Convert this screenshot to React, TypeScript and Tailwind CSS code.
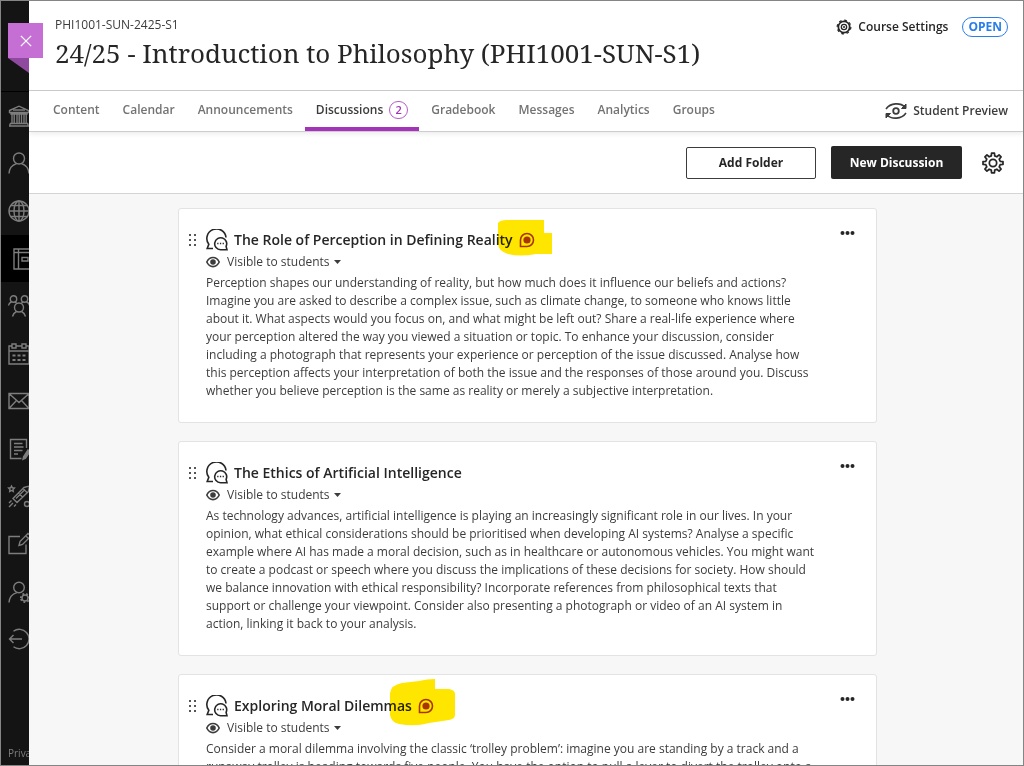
import type { ReactNode } from 'react'
import { clsx } from 'clsx'

type NavItem = {
  id: string
  label: string
  active?: boolean
  icon: ReactNode
}

type Discussion = {
  id: string
  title: string
  body: string
  highlight?: string
}

const NAV_ITEMS: NavItem[] = [
  {
    id: 'institution',
    label: 'Institution Page',
    icon: (
      <>
        <path d="M1.5 5.5 11 1.2l9.500 4.300v2H1.500zM3 7.500V9h16V7.500M1 21h20M2 18.500h18M2 18.500V21M20 18.500V21" />
        <path d="M4 9v9.500M6.200 9v9.500M9 9v9.500M11.200 9v9.500M13.500 9v9.500M16 9v9.500M18.200 9v9.500M5 5h12" />
      </>
    ),
  },
  {
    id: 'profile',
    label: 'Profile',
    icon: (
      <>
        <circle cx="11" cy="6.500" r="5.500" />
        <path d="M1 21.500c.3-5 3.500-8.500 7.500-9.800M13.500 11.700c4 1.300 7.200 4.800 7.500 9.800" />
      </>
    ),
  },
  {
    id: 'activity',
    label: 'Activity',
    icon: (
      <>
        <circle cx="11" cy="11" r="10" />
        <ellipse cx="11" cy="11" rx="5" ry="10" />
        <path d="M11 1v20M1 11h20M2.800 5.500h16.400M2.800 16.500h16.400" />
      </>
    ),
  },
  {
    id: 'courses',
    label: 'Courses',
    active: true,
    icon: (
      <>
        <path d="M6 1h20v20H6zM6 4.500h18M10.500 1v20" />
        <path d="M14 9.500h6v3.500h-6z" />
      </>
    ),
  },
  {
    id: 'organisations',
    label: 'Organisations',
    icon: (
      <>
        <circle cx="5.500" cy="4" r="3.200" />
        <circle cx="16.500" cy="4" r="3.200" />
        <circle cx="11" cy="12.500" r="4.500" />
        <path d="M.5 10.500c.3-2 1.500-3 3-3.500M7 7l2 1.500M21.500 10.500c-.3-2-1.500-3-3-3.500M15 7l-2 1.500M4.500 21.500c.7-2.500 2-4 4-5M17.500 21.500c-.7-2.500-2-4-4-5" />
      </>
    ),
  },
  {
    id: 'calendar',
    label: 'Calendar',
    icon: (
      <>
        <path d="M4 3H1v18h20V3h-3M8 3h6M1 8h20M4 1h4v4H4zM14 1h4v4h-4z" />
        <path strokeWidth="2.200" d="M4.500 12.500h3M9.500 12.500h3M14.500 12.500h3M4.500 17h3M9.500 17h3M14.500 17h3" />
      </>
    ),
  },
  {
    id: 'messages',
    label: 'Messages',
    icon: <path d="M1 3.500h20v15H1zM1 3.500l10 9 10-9M1 18.500l7.500-8M21 18.500l-7.500-8" />,
  },
  {
    id: 'marks',
    label: 'Marks',
    icon: (
      <>
        <path d="M18.500 10V1.500H2.500v19h11M6 5.500h8.500M6 9h9.500M6 12.500h8.500M6 16h4" />
        <path d="m15.500 19 4.500-7 2 1.300-4.500 7-2.500 1z" fill="currentColor" />
      </>
    ),
  },
  {
    id: 'assist',
    label: 'Assist',
    icon: (
      <>
        <path d="m5 13.500 11-11 5.500-1.500-1 5.500-11.500 11zM8 13.500l9-9M5 13.500l4 4M15 3.500l4 4M10.500 8l4 4" />
        <path d="m3.500 1 .9 1.800 2 .3-1.400 1.400.3 2-1.800-1-1.800 1 .3-2L.6 3.100l2-.3z" />
        <circle cx="19" cy="19" r="2.500" />
        <path d="M3.500 15.500 1 18M5 18l-4 4M8 19.500l-2 2" />
      </>
    ),
  },
  {
    id: 'tools',
    label: 'Tools',
    icon: <path d="M12 3.500H1v17h17v-9M11 12.500l1-4 8-8L23 3l-8.500 8.500zM17.500 2.500l3 3" />,
  },
  {
    id: 'admin',
    label: 'Admin',
    icon: (
      <>
        <circle cx="11" cy="6.500" r="5.300" />
        <path d="M1 21.500c.3-5 3.500-8.500 8-9.800" />
        <circle cx="17" cy="17" r="3" />
        <path strokeDasharray="1.800 2" strokeWidth="1.800" d="M12.800 17a4.200 4.200 0 1 1 8.400 0 4.200 4.200 0 1 1-8.400 0" />
      </>
    ),
  },
  {
    id: 'sign-out',
    label: 'Sign Out',
    icon: <path d="M5.500 3.200a9.700 9.700 0 1 1 0 15.600M14 11H1.500M5.500 7l-4 4 4 4" />,
  },
]

const TABS = [
  { label: 'Content' },
  { label: 'Calendar' },
  { label: 'Announcements' },
  { label: 'Discussions', count: 2 },
  { label: 'Gradebook' },
  { label: 'Messages' },
  { label: 'Analytics' },
  { label: 'Groups' },
]

const DISCUSSIONS: Discussion[] = [
  {
    id: 'perception',
    title: 'The Role of Perception in Defining Reality',
    body: 'Perception shapes our understanding of reality, but how much does it influence our beliefs and actions? Imagine you are asked to describe a complex issue, such as climate change, to someone who knows little about it. What aspects would you focus on, and what might be left out? Share a real-life experience where your perception altered the way you viewed a situation or topic. To enhance your discussion, consider including a photograph that represents your experience or perception of the issue discussed. Analyse how this perception affects your interpretation of both the issue and the responses of those around you. Discuss whether you believe perception is the same as reality or merely a subjective interpretation.',
    highlight: 'M8 8Q10 5 17 5H54V18H62V39H46Q30 42 18 39Q8 36 8 28Z',
  },
  {
    id: 'ethics',
    title: 'The Ethics of Artificial Intelligence',
    body: 'As technology advances, artificial intelligence is playing an increasingly significant role in our lives. In your opinion, what ethical considerations should be prioritised when developing AI systems? Analyse a specific example where AI has made a moral decision, such as in healthcare or autonomous vehicles. You might want to create a podcast or speech where you discuss the implications of these decisions for society. How should we balance innovation with ethical responsibility? Incorporate references from philosophical texts that support or challenge your viewpoint. Consider also presenting a photograph or video of an AI system in action, linking it back to your analysis.',
  },
  {
    id: 'dilemmas',
    title: 'Exploring Moral Dilemmas',
    body: 'Consider a moral dilemma involving the classic ‘trolley problem’: imagine you are standing by a track and a runaway trolley is heading towards five people. You have the option to pull a lever to divert the trolley onto a',
    highlight: 'M1 12Q2 4 13 2L30 0Q38-2 46-2V8H60Q66 9 66 13V34Q66 38 60 39L40 42Q26 46 10 43Q2 41 1 34Z',
  },
]

function gearPath(teeth: number, outer: number, inner: number) {
  const points: string[] = []
  const step = (Math.PI * 2) / teeth
  for (let i = 0; i < teeth; i++) {
    const a = i * step - Math.PI / 2
    const corners = [
      [a - step * 0.3, inner],
      [a - step * 0.18, outer],
      [a + step * 0.18, outer],
      [a + step * 0.3, inner],
    ]
    corners.forEach(([angle, r]) => {
      points.push(`${(12 + Math.cos(angle) * r).toFixed(2)} ${(12 + Math.sin(angle) * r).toFixed(2)}`)
    })
  }
  return `M${points.join('L')}Z`
}

function DiscussionIcon() {
  return (
    <svg viewBox="0 0 22 22" fill="none" stroke="currentColor" strokeWidth="1.600" className="size-[22px] shrink-0" aria-hidden="true">
      <path d="M7 19.500H1.200l1.600-4.200A9.600 9.600 0 1 1 20 8.500" />
      <path d="M21 20.800h-6.500a6 6 0 1 1 5.600-3.400z" />
      <path d="M11.200 14.500h1.300M13.900 14.500h1.300M16.600 14.500h1.300" strokeWidth="1.400" />
    </svg>
  )
}

function EyeIcon() {
  return (
    <svg viewBox="0 0 14 12" fill="none" stroke="currentColor" strokeWidth="1.600" className="h-3 w-3.5 shrink-0" aria-hidden="true">
      <path d="M.8 6C3.500-.1 10.500-.1 13.200 6 10.500 12.100 3.500 12.100.8 6Z" />
      <circle cx="7" cy="6" r="2" fill="currentColor" />
    </svg>
  )
}

function UnreadMarker({ highlight }: { highlight: string }) {
  return (
    <span className="relative ml-1.5 inline-flex" title="New activity">
      <svg viewBox="0 0 16 16" fill="none" stroke="#a83a1b" strokeWidth="1.600" className="size-4" aria-hidden="true">
        <path d="M1.500 14.500V8A6.500 6.500 0 1 1 8 14.500z" />
        <circle cx="8" cy="8" r="3.600" fill="#a83a1b" stroke="none" />
      </svg>
      {/* marker pen over the badge */}
      <svg viewBox="0 0 70 46" className="absolute -top-[17px] -left-[29px] h-[46px] w-[70px] max-w-none overflow-visible mix-blend-multiply" aria-hidden="true">
        <path d={highlight} fill="#ffe600" />
      </svg>
    </span>
  )
}

function Sidebar() {
  return (
    <nav aria-label="Main" className="relative flex w-7 shrink-0 flex-col bg-[#141414] text-[#7d7d7d]">
      <div className="h-[91px] shrink-0 border-b border-black" />
      <ul className="flex h-[571px] shrink-0 flex-col overflow-hidden">
        {NAV_ITEMS.map((item) => (
          <li key={item.id} className="min-h-0 flex-1">
            <a
              href="#"
              aria-label={item.label}
              className={clsx('flex h-full items-center pl-[7px]', item.active && 'bg-black')}
            >
              <svg viewBox="0 0 22 22" fill="none" stroke="currentColor" strokeWidth="1.400" className="size-[22px] shrink-0 overflow-visible" aria-hidden="true">
                {item.icon}
              </svg>
            </a>
          </li>
        ))}
      </ul>
      <a href="#" className="mt-auto overflow-hidden pb-1 pl-[7px] text-[10px] leading-4 whitespace-nowrap">
        Privacy
      </a>
      <div className="absolute top-[22px] left-[7px] z-10">
        <button type="button" aria-label="Close course" className="flex size-[35px] items-center justify-center bg-[#c56fd5] text-white">
          <svg viewBox="0 0 14 14" fill="none" stroke="currentColor" strokeWidth="1.500" className="size-3" aria-hidden="true">
            <path d="m1 1 12 12M13 1 1 13" />
          </svg>
        </button>
        <svg viewBox="0 0 21 15" className="h-[15px] w-[21px]" aria-hidden="true">
          <path d="M0 0h21v15z" fill="#8f4a9f" />
        </svg>
      </div>
    </nav>
  )
}

function CourseHeader() {
  return (
    <header className="flex h-[90px] shrink-0 items-start justify-between border-b border-[#cdcdcd] bg-white pr-[15px] pl-[26px]">
      <div>
        <p className="pt-4 text-[12px] leading-4 text-[#3c3c3c]">PHI1001-SUN-2425-S1</p>
        <h1 className="mt-0.5 font-['Noto_Serif','DejaVu_Serif',serif] text-[26px] leading-9 whitespace-nowrap">
          24/25 - Introduction to Philosophy (PHI1001-SUN-S1)
        </h1>
      </div>
      <div className="flex items-center gap-3.5 pt-4">
        <button type="button" className="flex items-center gap-1.5 text-[12px] leading-5 font-semibold">
          <svg viewBox="0 0 24 24" fill="none" stroke="currentColor" className="size-4" aria-hidden="true">
            <circle cx="12" cy="12" r="8.500" strokeWidth="2.600" />
            <circle cx="12" cy="12" r="10.300" strokeWidth="1.800" strokeDasharray="4 4.090" />
            <circle cx="12" cy="12" r="4" strokeWidth="2" />
            <circle cx="12" cy="12" r="1.500" fill="currentColor" stroke="none" />
          </svg>
          Course Settings
        </button>
        <button type="button" className="rounded-full border border-[#2b7de9] px-[5px] text-[12px] leading-[18px] font-bold text-[#2b7de9]">
          OPEN
        </button>
      </div>
    </header>
  )
}

function CourseTabs() {
  return (
    <div className="relative flex h-[41px] shrink-0 items-stretch justify-between border-b border-[#cdcdcd] bg-white pr-[15px] pl-[13px] shadow-[0_2px_5px_rgba(0,0,0,0.08)]">
      <nav aria-label="Course" className="flex gap-px">
        {TABS.map((tab) => (
          <a
            key={tab.label}
            href="#"
            className={clsx(
              'flex items-center gap-1.5 border-b-4 px-[11px] pt-0.5 text-[12px] leading-5 font-semibold',
              tab.count ? 'border-[#a333b8] text-[#3c3c3c]' : 'border-transparent text-[#737373]'
            )}
          >
            {tab.label}
            {tab.count && (
              <span className="flex h-[18px] w-[19px] items-center justify-center rounded-full border border-[#b85cc9] text-[11px] font-semibold text-[#a333b8]">
                {tab.count}
              </span>
            )}
          </a>
        ))}
      </nav>
      <button type="button" className="flex items-center gap-1.5 text-[12px] leading-5 font-semibold text-[#3c3c3c]">
        <svg viewBox="0 0 22 16" fill="none" stroke="currentColor" strokeWidth="1.600" className="h-4 w-[22px]" aria-hidden="true">
          <path d="M1 6C5.500-.5 15.500-.5 20 4M21 10C16.500 16.500 6.500 16.500 2 12" />
          <path d="M21 1v4.500h-4.500zM1 15v-4.500h4.500z" fill="currentColor" strokeWidth="1" />
          <circle cx="11" cy="8" r="2.800" strokeWidth="1.800" />
        </svg>
        Student Preview
      </button>
    </div>
  )
}

function Toolbar() {
  return (
    <div className="flex h-[62px] shrink-0 items-center justify-end border-b border-[#d4d4d4] bg-white pr-[19px] text-[12px] leading-5 font-bold">
      <button type="button" className="h-8 w-[130px] rounded-xs border border-[#3c3c3c]">
        Add Folder
      </button>
      <button type="button" className="ml-[15px] h-[33px] w-[131px] rounded-xs bg-[#262626] text-white">
        New Discussion
      </button>
      <button type="button" aria-label="Discussion settings" className="ml-5">
        <svg viewBox="0 0 24 24" fill="none" stroke="currentColor" strokeWidth="1.900" strokeLinejoin="round" className="size-[22px]" aria-hidden="true">
          <path d={gearPath(8, 11, 8)} />
          <circle cx="12" cy="12" r="4" />
        </svg>
      </button>
    </div>
  )
}

function DiscussionCard({ discussion }: { discussion: Discussion }) {
  return (
    <article className="flex shrink-0 items-start rounded-[3px] border border-[#e3e3e3] bg-white pt-[19px] pr-[21px] pb-[22px] pl-2.5">
      <button type="button" aria-label={`Reorder ${discussion.title}`} className="mt-[5px] mr-[9px] text-[#555]">
        <svg viewBox="0 0 8 14" fill="currentColor" className="h-3.5 w-2" aria-hidden="true">
          <path d="M0 1h2v2H0zM5 1h2v2H5zM0 6h2v2H0zM5 6h2v2H5zM0 11h2v2H0zM5 11h2v2H5z" />
        </svg>
      </button>
      <div className="min-w-0 flex-1">
        <h2 className="flex h-6 items-center text-[14px] leading-6 font-semibold">
          <DiscussionIcon />
          <a href="#" className="ml-1.5">{discussion.title}</a>
          {discussion.highlight && <UnreadMarker highlight={discussion.highlight} />}
        </h2>
        <button type="button" className="flex h-5 items-center text-[12px] leading-5 text-[#3c3c3c]">
          <EyeIcon />
          <span className="ml-[7px]">Visible to students</span>
          <svg viewBox="0 0 7 4" className="ml-1 h-1 w-[7px]" aria-hidden="true">
            <path d="M0 0h7L3.500 4z" fill="currentColor" />
          </svg>
        </button>
        <p className="mt-0.5 max-w-[609px] text-[12px] leading-[18px] text-[#3c3c3c]">{discussion.body}</p>
      </div>
      <button type="button" aria-label={`More options for ${discussion.title}`} className="mt-0.5">
        <svg viewBox="0 0 15 6" fill="currentColor" className="h-1.5 w-[15px]" aria-hidden="true">
          <circle cx="2.500" cy="3" r="2" />
          <circle cx="7.500" cy="3" r="2" />
          <circle cx="12.500" cy="3" r="2" />
        </svg>
      </button>
    </article>
  )
}

export default function App() {
  return (
    <div className="flex h-screen overflow-hidden border border-[#858585] bg-white font-['Open_Sans',sans-serif] text-[#262626]">
      <Sidebar />
      <div className="flex min-w-0 flex-1 flex-col">
        <CourseHeader />
        <CourseTabs />
        <Toolbar />
        <main className="min-h-0 flex-1 overflow-hidden bg-[#f7f7f7] pt-3.5 pl-[3px]">
          <div className="mx-auto flex max-w-[699px] flex-col gap-[18px]">
            {DISCUSSIONS.map((discussion) => (
              <DiscussionCard key={discussion.id} discussion={discussion} />
            ))}
          </div>
        </main>
      </div>
    </div>
  )
}
